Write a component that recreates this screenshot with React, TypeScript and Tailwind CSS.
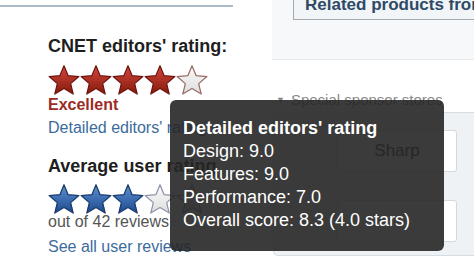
const STAR_POINTS =
  '16,0 20.35,10.5 31.7,11.4 23.04,18.8 25.7,29.85 16,23.9 6.3,29.85 8.96,18.8 0.3,11.4 11.65,10.5'

type Tone = 'red' | 'blue'

const TONES: Record<Tone, { top: string; bottom: string; stroke: string; empty: string }> = {
  red: { top: '#d24a3c', bottom: '#86170f', stroke: '#6e150e', empty: '#9a6a66' },
  blue: { top: '#5f90d4', bottom: '#1c4a8e', stroke: '#1a3868', empty: '#8b93a6' },
}

function Star({ tone, filled }: { tone: Tone; filled: boolean }) {
  const t = TONES[tone]
  const id = `star-${tone}-${filled ? 'f' : 'e'}`
  return (
    <svg viewBox="-0.8 -0.8 33.6 31.6" className="h-[30px] w-[32px] shrink-0">
      <defs>
        <linearGradient id={id} x1="0" y1="0" x2="0" y2="1">
          {filled ? (
            <>
              <stop offset="0" stopColor={t.top} />
              <stop offset="1" stopColor={t.bottom} />
            </>
          ) : (
            <>
              <stop offset="0" stopColor="#fafafa" />
              <stop offset="1" stopColor="#dedede" />
            </>
          )}
        </linearGradient>
      </defs>
      <polygon
        points={STAR_POINTS}
        fill={`url(#${id})`}
        stroke={filled ? t.stroke : t.empty}
        strokeWidth="1.3"
        strokeLinejoin="round"
      />
    </svg>
  )
}

function Stars({ tone, count }: { tone: Tone; count: number }) {
  return (
    <div className="flex">
      {[0, 1, 2, 3, 4].map((i) => (
        <Star key={i} tone={tone} filled={i < count} />
      ))}
    </div>
  )
}

export default function App() {
  return (
    <div
      className="relative flex h-[266px] w-[474px] overflow-hidden bg-white"
      style={{ fontFamily: '"Liberation Sans", Arial, sans-serif' }}
    >
      {/* left column: ratings */}
      <div className="w-[272px] shrink-0">
        <div className="mt-[5px] h-[2px] w-[233px] bg-[#a9bccb]" />
        <div className="pl-[48px]">
          <div className="mt-[28px] text-[18px] font-bold leading-[22px] text-[#1e1e1e]">
            CNET editors' rating:
          </div>
          <div className="mt-[8px]">
            <Stars tone="red" count={4} />
          </div>
          <div className="text-[16px] font-bold leading-[20px] text-[#9c2b25]">Excellent</div>
          <div className="mt-[3px] whitespace-nowrap text-[16px] leading-[20px] text-[#3b6b9c]">
            Detailed editors' rating
          </div>
          <div className="mt-[17px] whitespace-nowrap text-[18px] font-bold leading-[22px] text-[#1e1e1e]">
            Average user rating
          </div>
          <div className="mt-[7px] h-[28px] overflow-visible">
            <Stars tone="blue" count={3} />
          </div>
          <div className="text-[16px] leading-[20px] text-[#555]">out of 42 reviews</div>
          <div className="mt-[5px] whitespace-nowrap text-[16px] leading-[20px] text-[#3b6b9c]">
            See all user reviews
          </div>
        </div>
      </div>

      {/* right column */}
      <div className="flex-1">
        <div className="h-[60px] overflow-hidden border-b border-[#e6eaec] bg-[#f6f8f9] pl-[21px]">
          <div className="-mt-[10px] h-[30px] border border-[#a3abb1] bg-[#f2f5f7] pl-[11px] pt-[5px]">
            <div className="whitespace-nowrap text-[17px] font-bold leading-[17px] text-[#2e4a66]">
              Related products from
            </div>
          </div>
        </div>

        <div className="mt-[31px] flex items-center gap-[6px] pl-[4px] text-[15px] leading-[18px] text-[#8a8a8a]">
          <span className="text-[9px]">▼</span>
          <span className="whitespace-nowrap">Special sponsor stores</span>
        </div>

        <div className="ml-[1px] mt-[3px] h-[144px] rounded-bl-[5px] border-b border-l border-t border-[#d5dde2] bg-[#eef2f5] pl-[63px] pt-[17px]">
          <div className="flex h-[42px] w-[120px] items-center justify-center rounded-[3px] border border-[#d3d9de] bg-white text-[17px] text-[#1c2a4a]">
            Sharp
          </div>
          <div className="mt-[28px] h-[42px] w-[120px] rounded-[3px] border border-[#d3d9de] bg-white" />
        </div>
      </div>

      {/* tooltip */}
      <div className="absolute left-[170px] top-[100px] h-[151px] w-[274px] rounded-[6px] bg-[rgba(38,38,38,0.9)] pl-[13px] pt-[17px] text-[18px] leading-[23px] text-white">
        <div className="font-bold">Detailed editors' rating</div>
        <div>Design: 9.0</div>
        <div>Features: 9.0</div>
        <div>Performance: 7.0</div>
        <div>Overall score: 8.3 (4.0 stars)</div>
      </div>
    </div>
  )
}
